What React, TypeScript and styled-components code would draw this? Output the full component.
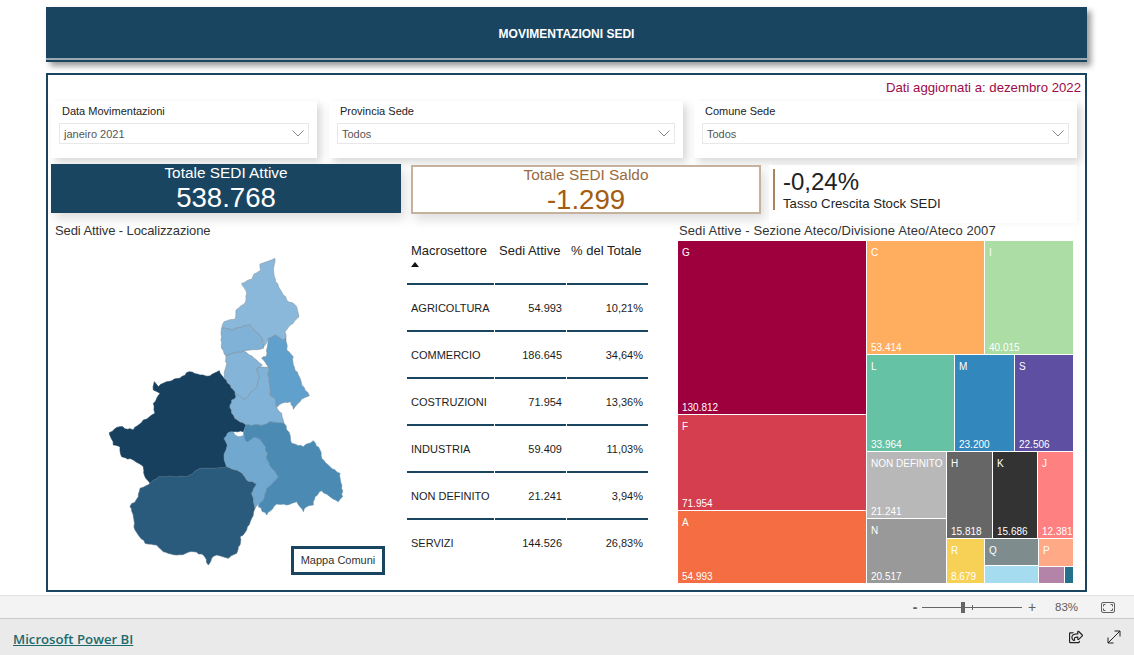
import * as React from "react"
import styled, { createGlobalStyle } from "styled-components"
import { FaRegShareSquare } from "react-icons/fa"

const navy = "#1a4561"

const GlobalStyle = createGlobalStyle`
	html, body {
		margin: 0;
		padding: 0;
		background: #fff;
		font-family: "Liberation Sans", Arial, sans-serif;
		overflow: hidden;
	}
`

const Page = styled.div`
	display: flex;
	flex-direction: column;
	width: 1134px;
	height: 655px;
`

const Report = styled.main`
	height: 595px;
	box-sizing: border-box;
	padding: 7px 0 0 46px;
`

const Banner = styled.header`
	display: flex;
	align-items: center;
	justify-content: center;
	width: 1041px;
	height: 53px;
	background: ${navy};
	border-bottom: 2px solid ${navy};
	box-shadow: inset 0 -2px 0 #9aa8b2, 4px 4px 6px rgba(0, 0, 0, 0.4);
	color: #fff;
	font-size: 12px;
	font-weight: 700;
`

const Panel = styled.section`
	box-sizing: border-box;
	width: 1041px;
	height: 519px;
	margin-top: 11px;
	border: 2px solid ${navy};
	padding: 0 3px;
`

const Updated = styled.div`
	height: 26px;
	padding: 4px 1px 0 0;
	box-sizing: border-box;
	text-align: right;
	font-size: 13.2px;
	line-height: 18px;
	color: #9c0a48;
`

const FilterRow = styled.div`
	display: flex;
	gap: 11px;
`

const Slicer = styled.div<{ $width: number }>`
	box-sizing: border-box;
	width: ${(p) => p.$width}px;
	height: 57px;
	padding: 3px 8px 0;
	background: #fff;
	box-shadow: 4px 4px 8px rgba(0, 0, 0, 0.16);
	&:first-child {
		margin-right: 1px;
	}
`

const SlicerLabel = styled.div`
	height: 19px;
	padding-left: 3px;
	font-size: 11px;
	line-height: 15px;
	color: #222;
`

const Dropdown = styled.div`
	display: flex;
	align-items: center;
	justify-content: space-between;
	box-sizing: border-box;
	height: 21px;
	padding: 0 4px;
	border: 1px solid #e8e8e8;
	font-size: 11px;
	color: #555;
`

const KpiRow = styled.div`
	display: flex;
	height: 60px;
	margin-top: 6px;
	gap: 8px;
`

const Kpi = styled.div<{ $outlined?: boolean }>`
	box-sizing: border-box;
	width: 350px;
	height: 49px;
	margin-right: 2px;
	margin-top: ${(p) => (p.$outlined ? 1 : 0)}px;
	text-align: center;
	background: ${(p) => (p.$outlined ? "#fff" : navy)};
	border: ${(p) => (p.$outlined ? "2px solid #c6b19d" : "none")};
	color: ${(p) => (p.$outlined ? "#a35c10" : "#fff")};
	box-shadow: 4px 6px 10px rgba(0, 0, 0, 0.13);
`

const KpiTitle = styled.div<{ $outlined?: boolean }>`
	font-size: 15.4px;
	line-height: 18px;
	color: ${(p) => (p.$outlined ? "#9a6b3c" : "#fff")};
	margin-top: ${(p) => (p.$outlined ? -1 : 0)}px;
`

const KpiValue = styled.div`
	margin-top: 1px;
	font-size: 27.6px;
	line-height: 30px;
`

const GrowthCard = styled.div`
	display: flex;
	box-sizing: border-box;
	width: 308px;
	height: 58px;
	margin: 1px 0 0 -2px;
	padding: 4px 0 0 4px;
	background: #fff;
	box-shadow: 2px 0 6px rgba(0, 0, 0, 0.05);
`

const GrowthRule = styled.div`
	width: 2px;
	height: 41px;
	margin-right: 8px;
	background: #a58466;
`

const GrowthValue = styled.div`
	margin-top: -1px;
	font-size: 24px;
	line-height: 27px;
	color: #222;
`

const GrowthLabel = styled.div`
	margin-top: 1px;
	font-size: 13.2px;
	line-height: 16px;
	color: #222;
`

const ContentRow = styled.div`
	display: flex;
	margin-top: -1px;
`

const MapColumn = styled.div`
	position: relative;
	width: 355px;
	height: 359px;
`

const VisualTitle = styled.div<{ $indent?: number; $spacing: number }>`
	height: 17px;
	padding-left: ${(p) => p.$indent ?? 0}px;
	font-size: 13px;
	line-height: 16px;
	letter-spacing: ${(p) => p.$spacing}px;
	color: #333;
`

const RegionMap = styled.svg`
	display: block;
	margin: 10px 0 0 49px;
`

const MapButton = styled.button`
	position: absolute;
	left: 240px;
	bottom: 7px;
	box-sizing: border-box;
	width: 94px;
	height: 29px;
	padding: 0 0 2px;
	background: #fff;
	border: 3px solid ${navy};
	font: 11px "Liberation Sans", Arial, sans-serif;
	color: #333;
`

const TableColumn = styled.div`
	width: 272px;
	padding-top: 17px;
`

const DataTable = styled.table`
	table-layout: fixed;
	width: 241px;
	border-collapse: separate;
	border-spacing: 1px 0;
	font-size: 11px;
	color: #1c1c1c;
`

const HeadCell = styled.th<{ $width: number }>`
	width: ${(p) => p.$width}px;
	height: 43px;
	padding: 3px 0 0 4px;
	box-sizing: border-box;
	vertical-align: top;
	text-align: left;
	font-size: 13px;
	font-weight: 400;
	line-height: 15px;
	white-space: nowrap;
	color: #222;
`

const SortCaret = styled.div`
	width: 0;
	height: 0;
	margin-top: 4px;
	border-left: 4px solid transparent;
	border-right: 4px solid transparent;
	border-bottom: 5px solid #111;
`

const BodyCell = styled.td<{ $numeric?: boolean }>`
	height: 47px;
	box-sizing: border-box;
	padding: 0 ${(p) => (p.$numeric ? 4 : 0)}px 0 ${(p) => (p.$numeric ? 0 : 4)}px;
	border-top: 2px solid ${navy};
	text-align: ${(p) => (p.$numeric ? "right" : "left")};
	white-space: nowrap;
	&:last-child {
		padding-right: 5px;
	}
`

const BodyRow = styled.tr`
	&:last-child td {
		height: 48px;
	}
`

const TreeColumn = styled.div`
	width: 395px;
`

const Treemap = styled.div`
	display: flex;
	gap: 1px;
	width: 395px;
	height: 342px;
	margin-top: 1px;
`

const Stack = styled.div<{ $size?: number; $row?: boolean }>`
	display: flex;
	flex-direction: ${(p) => (p.$row ? "row" : "column")};
	gap: 1px;
	flex: ${(p) => (p.$size ? `0 0 ${p.$size}px` : "1 1 0")};
	min-width: 0;
	min-height: 0;
`

const Tile = styled.div<{ $bg: string; $size?: number }>`
	display: flex;
	flex-direction: column;
	justify-content: space-between;
	box-sizing: border-box;
	flex: ${(p) => (p.$size ? `0 0 ${p.$size}px` : "1 1 0")};
	min-width: 0;
	padding: 6px 4px 0;
	overflow: hidden;
	background: ${(p) => p.$bg};
	color: #fff;
	font-size: 10px;
	line-height: 12px;
	white-space: nowrap;
`

const ZoomBar = styled.div`
	display: flex;
	align-items: center;
	justify-content: flex-end;
	box-sizing: border-box;
	height: 24px;
	padding-right: 19px;
	background: #f3f3f3;
	border-top: 1px solid #e2e2e2;
	border-bottom: 1px solid #c9c9c9;
	color: #605e5c;
`

const ZoomSign = styled.span<{ $light?: boolean }>`
	width: 14px;
	text-align: center;
	font-size: 14px;
	font-weight: ${(p) => (p.$light ? 400 : 700)};
	line-height: 14px;
`

const ZoomTrack = styled.div`
	position: relative;
	width: 100px;
	height: 1px;
	margin: 0 3px 0 0;
	background: #666;
`

const ZoomThumb = styled.div`
	position: absolute;
	left: 39px;
	top: -5px;
	width: 4px;
	height: 11px;
	background: #666;
`

const ZoomTick = styled.div`
	position: absolute;
	left: 50px;
	top: -2px;
	width: 1px;
	height: 5px;
	background: #666;
`

const ZoomValue = styled.span`
	width: 23px;
	margin: 0 23px 0 16px;
	font-size: 11.5px;
`

const Footer = styled.footer`
	display: flex;
	align-items: center;
	justify-content: space-between;
	flex: 1;
	padding: 3px 13px 0;
	background: #eaeaea;
`

const BrandLink = styled.a`
	font-family: "Open Sans", sans-serif;
	font-size: 13.2px;
	font-weight: 600;
	color: #1b6b6d;
	text-decoration: underline;
`

const FooterActions = styled.div`
	display: flex;
	align-items: center;
	gap: 24px;
	margin-top: -3px;
	color: #222;
`

type Pt = [number, number]

// map outlines, traced in 3x coordinates
const toPoints = (s: string): Pt[] =>
	s.split(" ").map((p) => p.split(",").map(Number) as Pt)

const wobble = (x: number, y: number) => {
	const v = Math.sin(x * 12.9898 + y * 78.233) * 43758.5453
	return v - Math.floor(v) - 0.5
}

// rough up an edge so the borders look like real ones
const roughen = (s: string) => {
	const pts = toPoints(s)
	const out: string[] = []
	pts.forEach((a, i) => {
		const b = pts[(i + 1) % pts.length]
		const len = Math.hypot(b[0] - a[0], b[1] - a[1])
		const n = Math.max(1, Math.round(len / 9))
		out.push(`${a[0]},${a[1]}`)
		for (let k = 1; k < n; k++) {
			const t = k / n
			const x = a[0] + (b[0] - a[0]) * t
			const y = a[1] + (b[1] - a[1]) * t
			out.push(`${(x + wobble(x, y) * 5).toFixed(1)},${(y + wobble(y, x) * 5).toFixed(1)}`)
		}
	})
	return out.join(" ")
}

const regions = [
	{
		fill: "#17405e",
		stroke: "#17405e",
		points:
			"28,548 60,530 100,540 130,510 165,490 160,460 180,430 160,420 163,395 175,410 200,395 240,385 268,365 300,375 330,378 358,362 372,385 405,425 408,440 395,450 390,465 395,490 412,510 438,525 430,545 395,545 375,565 382,585 372,620 380,650 340,655 300,655 260,680 225,680 175,680 150,700 135,680 130,650 100,630 65,620 60,590 40,585",
	},
	{
		fill: "#2a5b7c",
		stroke: "#4d6d84",
		points:
			"150,700 175,680 225,680 260,680 300,655 340,655 380,650 420,665 440,690 470,700 455,730 465,775 455,805 440,840 420,860 420,885 410,910 385,925 350,915 335,925 325,945 310,915 280,905 230,915 190,905 170,885 135,880 105,840 100,800 90,770 115,740 120,715",
	},
	{
		fill: "#8ab8da",
		stroke: "#8d9aa6",
		points:
			"525,25 480,42 482,60 462,72 455,88 425,100 440,130 437,155 408,180 405,208 372,215 365,235 395,240 450,225 485,262 490,292 505,265 525,255 548,270 558,265 555,245 597,200 590,170 560,150 545,125 527,95 520,60",
	},
	{
		fill: "#7fb2d6",
		stroke: "#7f8e9b",
		points: "365,235 395,240 450,225 485,262 490,295 450,300 430,303 378,318 365,295",
	},
	{
		fill: "#80b3d7",
		stroke: "#7f8e9b",
		points:
			"480,350 505,350 510,435 525,445 530,472 545,490 552,520 510,515 490,525 438,525 412,510 395,490 390,465 395,450 408,440 405,432 435,447 465,415 478,385 470,355",
	},
	{
		fill: "#84b5d8",
		stroke: "#7f8e9b",
		points: "378,318 430,303 470,330 487,345 470,355 478,385 465,415 435,447 405,432 405,425 372,385 378,350",
	},
	{
		fill: "#5fa0cc",
		stroke: "#7f8e9b",
		points:
			"505,265 525,255 548,270 558,265 560,300 580,320 580,345 595,375 605,405 628,437 605,447 580,478 572,455 545,460 530,472 525,445 510,435 505,350 485,325 498,320",
	},
	{
		fill: "#70a8d0",
		stroke: "#7a97ad",
		points:
			"382,550 395,545 405,555 420,560 440,550 460,562 480,568 497,590 500,610 502,630 535,680 500,715 490,750 480,760 465,775 455,730 470,700 440,690 420,665 380,650 372,620 382,585 372,565",
	},
	{
		fill: "#4b8ab2",
		stroke: "#5d8fb0",
		points:
			"438,525 490,525 510,515 552,520 570,555 575,580 610,590 640,572 660,600 665,625 690,650 720,670 728,740 715,755 690,740 665,722 645,740 640,765 620,770 610,785 590,755 560,765 530,762 500,795 475,770 490,750 500,715 535,680 502,630 497,590 480,568 460,562 440,575 430,550",
	},
]

const rows = [
	["AGRICOLTURA", "54.993", "10,21%"],
	["COMMERCIO", "186.645", "34,64%"],
	["COSTRUZIONI", "71.954", "13,36%"],
	["INDUSTRIA", "59.409", "11,03%"],
	["NON DEFINITO", "21.241", "3,94%"],
	["SERVIZI", "144.526", "26,83%"],
]

const filters = [
	{ label: "Data Movimentazioni", value: "janeiro 2021", width: 266 },
	{ label: "Provincia Sede", value: "Todos", width: 354 },
	{ label: "Comune Sede", value: "Todos", width: 383 },
]

function Chevron() {
	return (
		<svg width="12" height="7" viewBox="0 0 12 7" fill="none" stroke="#8a8a8a" strokeWidth="1">
			<path d="M0.5 0.5 L6 6 L11.5 0.5" />
		</svg>
	)
}

function Cell({ bg, name, value, size }: { bg: string; name?: string; value?: string; size?: number }) {
	return (
		<Tile $bg={bg} $size={size}>
			<span>{name}</span>
			<span>{value}</span>
		</Tile>
	)
}

export default function App() {
	return (
		<Page>
			<GlobalStyle />
			<Report>
				<Banner>MOVIMENTAZIONI SEDI</Banner>
				<Panel>
					<Updated>Dati aggiornati a: dezembro 2022</Updated>
					<FilterRow>
						{filters.map((f) => (
							<Slicer key={f.label} $width={f.width}>
								<SlicerLabel>{f.label}</SlicerLabel>
								<Dropdown>
									{f.value}
									<Chevron />
								</Dropdown>
							</Slicer>
						))}
					</FilterRow>
					<KpiRow>
						<Kpi>
							<KpiTitle>Totale SEDI Attive</KpiTitle>
							<KpiValue>538.768</KpiValue>
						</Kpi>
						<Kpi $outlined>
							<KpiTitle $outlined>Totale SEDI Saldo</KpiTitle>
							<KpiValue>-1.299</KpiValue>
						</Kpi>
						<GrowthCard>
							<GrowthRule />
							<div>
								<GrowthValue>-0,24%</GrowthValue>
								<GrowthLabel>Tasso Crescita Stock SEDI</GrowthLabel>
							</div>
						</GrowthCard>
					</KpiRow>
					<ContentRow>
						<MapColumn>
							<VisualTitle $indent={4} $spacing={-0.1}>
								Sedi Attive - Localizzazione
							</VisualTitle>
							<RegionMap width="260" height="330" viewBox="0 0 780 990">
								{regions.map((r) => (
									<polygon
										key={r.fill}
										points={roughen(r.points)}
										fill={r.fill}
										stroke={r.stroke}
										strokeWidth="1.8"
										strokeLinejoin="round"
									/>
								))}
							</RegionMap>
							<MapButton>Mappa Comuni</MapButton>
						</MapColumn>
						<TableColumn>
							<DataTable>
								<thead>
									<tr>
										<HeadCell $width={87}>
											Macrosettore
											<SortCaret />
										</HeadCell>
										<HeadCell $width={71}>Sedi Attive</HeadCell>
										<HeadCell $width={81}>% del Totale</HeadCell>
									</tr>
								</thead>
								<tbody>
									{rows.map((r) => (
										<BodyRow key={r[0]}>
											<BodyCell>{r[0]}</BodyCell>
											<BodyCell $numeric>{r[1]}</BodyCell>
											<BodyCell $numeric>{r[2]}</BodyCell>
										</BodyRow>
									))}
								</tbody>
							</DataTable>
						</TableColumn>
						<TreeColumn>
							<VisualTitle $indent={1} $spacing={0.1}>
								Sedi Attive - Sezione Ateco/Divisione Ateo/Ateco 2007
							</VisualTitle>
							<Treemap>
								<Stack $size={188}>
									<Cell bg="#9e003e" name="G" value="130.812" size={173} />
									<Cell bg="#d53e4f" name="F" value="71.954" size={95} />
									<Cell bg="#f46d43" name="A" value="54.993" />
								</Stack>
								<Stack>
									<Stack $size={113} $row>
										<Cell bg="#ffae5f" name="C" value="53.414" size={117} />
										<Cell bg="#abdda4" name="I" value="40.015" />
									</Stack>
									<Stack $size={96} $row>
										<Cell bg="#66c2a5" name="L" value="33.964" size={87} />
										<Cell bg="#3288bd" name="M" value="23.200" size={59} />
										<Cell bg="#5e4fa2" name="S" value="22.506" />
									</Stack>
									<Stack $row>
										<Stack $size={79}>
											<Cell bg="#b8b8b8" name="NON DEFINITO" value="21.241" size={66} />
											<Cell bg="#999999" name="N" value="20.517" />
										</Stack>
										<Stack>
											<Stack $size={86} $row>
												<Cell bg="#666666" name="H" value="15.818" size={45} />
												<Cell bg="#333333" name="K" value="15.686" size={44} />
												<Cell bg="#ff8080" name="J" value="12.381" />
											</Stack>
											<Stack $row>
												<Cell bg="#f6d156" name="R" value="8.679" size={37} />
												<Stack $size={53}>
													<Cell bg="#7f8c8d" name="Q" size={26} />
													<Cell bg="#a6dcef" />
												</Stack>
												<Stack>
													<Cell bg="#ffa987" name="P" size={27} />
													<Stack $row>
														<Cell bg="#b384a7" size={25} />
														<Cell bg="#25708a" />
													</Stack>
												</Stack>
											</Stack>
										</Stack>
									</Stack>
								</Stack>
							</Treemap>
						</TreeColumn>
					</ContentRow>
				</Panel>
			</Report>
			<ZoomBar>
				<ZoomSign>-</ZoomSign>
				<ZoomTrack>
					<ZoomThumb />
					<ZoomTick />
				</ZoomTrack>
				<ZoomSign $light>+</ZoomSign>
				<ZoomValue>83%</ZoomValue>
				<svg width="14" height="11" viewBox="0 0 14 11" fill="none" stroke="#605e5c" strokeWidth="1">
					<rect x="0.5" y="0.5" width="13" height="10" rx="1.5" />
					<path d="M2.5 4.5 V2.5 H4.5 M9.5 2.5 H11.5 V4.5 M11.5 6.5 V8.5 H9.5 M4.5 8.5 H2.5 V6.5" />
				</svg>
			</ZoomBar>
			<Footer>
				<BrandLink href="#">Microsoft Power BI</BrandLink>
				<FooterActions>
					<FaRegShareSquare size={14} />
					<svg width="14" height="14" viewBox="0 0 14 14" fill="none" stroke="#222" strokeWidth="1">
						<path d="M1 13 L13 1 M7.5 1 H13 V6.5 M1 7.5 V13 H6.5" />
					</svg>
				</FooterActions>
			</Footer>
		</Page>
	)
}
